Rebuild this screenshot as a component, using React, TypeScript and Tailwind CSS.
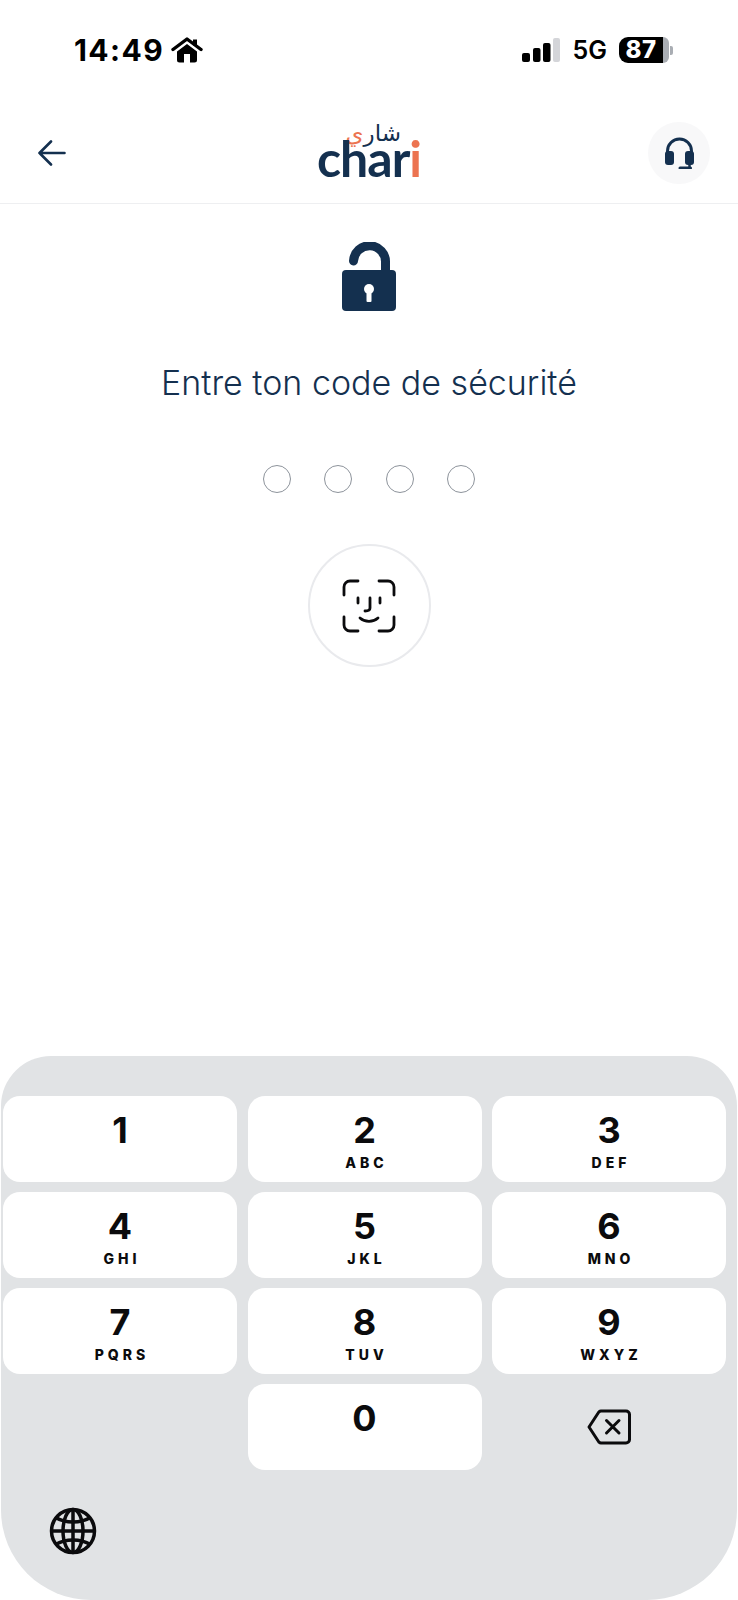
const KEYS = [
  { digit: "1", letters: "" },
  { digit: "2", letters: "ABC" },
  { digit: "3", letters: "DEF" },
  { digit: "4", letters: "GHI" },
  { digit: "5", letters: "JKL" },
  { digit: "6", letters: "MNO" },
  { digit: "7", letters: "PQRS" },
  { digit: "8", letters: "TUV" },
  { digit: "9", letters: "WXYZ" },
];

function Key({ digit, letters }: { digit: string; letters: string }) {
  return (
    <div className="h-[86px] rounded-[17px] bg-white flex flex-col items-center pt-[16px]">
      <span className="text-[36px] leading-[36px] font-bold text-[#0b0b0d]">{digit}</span>
      {letters && (
        <span className="mt-[8px] pl-[4px] text-[14px] leading-[14px] font-extrabold tracking-[4px] text-[#0b0b0d]">
          {letters}
        </span>
      )}
    </div>
  );
}

function HomeIcon() {
  return (
    <svg width="32" height="26" viewBox="0 0 32 26" className="shrink-0">
      <path d="M22 2.5h4v6h-4z" fill="#000" />
      <path d="M2 12.5 16 2l14 10.5" fill="none" stroke="#000" strokeWidth="3.4" strokeLinecap="round" strokeLinejoin="round" />
      <path
        fillRule="evenodd"
        d="M16 7 6 14.5V23a2.5 2.5 0 0 0 2.5 2.5h15A2.5 2.5 0 0 0 26 23v-8.5L16 7Zm-3 10h6v8.5h-6V17Z"
        fill="#000"
      />
    </svg>
  );
}

function SignalIcon() {
  return (
    <svg width="38" height="24" viewBox="0 0 38 24">
      <rect x="0" y="15" width="8" height="9" rx="2" fill="#000" />
      <rect x="11" y="10" width="7.5" height="14" rx="2" fill="#000" />
      <rect x="21" y="5" width="7.5" height="19" rx="2" fill="#000" />
      <rect x="31" y="0" width="7" height="24" rx="2" fill="#d4d5d9" />
    </svg>
  );
}

function StatusBar() {
  return (
    <div className="h-[100px] shrink-0 flex items-center justify-between pl-[74px] pr-[65px]">
      <div className="flex items-center gap-[7px]">
        <span className="text-[30px] leading-none font-bold tracking-[1.4px] text-black">14:49</span>
        <HomeIcon />
      </div>
      <div className="flex items-center">
        <SignalIcon />
        <span className="ml-[13px] text-[25px] leading-none font-semibold text-black">5G</span>
        <div className="ml-[12px] flex h-[26px] w-[50px]">
          <div className="flex w-[44px] items-center justify-center rounded-l-[9px] bg-black text-[24px] leading-none font-extrabold tracking-[0.5px] text-white">
            87
          </div>
          <div className="flex-1 rounded-r-[9px] bg-[#a9adb3]" />
        </div>
        <div className="ml-[1px] h-[9px] w-[3px] rounded-r-[2px] bg-[#a9adb3]" />
      </div>
    </div>
  );
}

function Logo() {
  return (
    <div className="flex flex-col items-center w-[104px]">
      <div
        dir="rtl"
        className="h-[20px] self-end mr-[20px] text-[23px] leading-[20px] text-[#14304f] font-['DejaVu_Sans',sans-serif]"
      >
        شار<span className="text-[#ec7350]">ي</span>
      </div>
      <div className="-mt-[10px] text-[50px] leading-[50px] font-bold tracking-[-1px] text-[#14304f] font-['Lato',sans-serif]">
        char
        <span className="text-[#ec7350]">i</span>
      </div>
    </div>
  );
}

function Header() {
  return (
    <div className="h-[104px] shrink-0 border-b border-[#eeeff1] flex items-center justify-between pl-[38px] pr-[28px] pt-[3px]">
      <div className="w-[52px]">
        <svg width="28" height="26" viewBox="0 0 28 26" fill="none" stroke="#14304f" strokeWidth="2.6" strokeLinecap="round" strokeLinejoin="round">
          <path d="M26.500 13H1.500M13 1.500 1.500 13 13 24.500" />
        </svg>
      </div>
      <Logo />
      <div className="flex h-[62px] w-[62px] items-center justify-center rounded-full bg-[#f8f8f9]">
        <svg width="29" height="32" viewBox="0 0 29 32" fill="none">
          <path d="M2.500 18v-4a12 12 0 0 1 24 0v4" stroke="#14304f" strokeWidth="3" />
          <rect x="0" y="14" width="9" height="14" rx="3" fill="#14304f" />
          <rect x="20" y="14" width="9" height="14" rx="3" fill="#14304f" />
          <path d="M15 31h10.500" stroke="#14304f" strokeWidth="3" strokeLinecap="round" />
          <path d="M24.500 27v4" stroke="#14304f" strokeWidth="2.500" />
        </svg>
      </div>
    </div>
  );
}

function LockIcon() {
  return (
    <svg width="54" height="69" viewBox="0 0 54 69">
      <path d="M11.500 19A16 16 0 0 1 43.500 20.500V32" fill="none" stroke="#14304f" strokeWidth="9" strokeLinecap="round" />
      <rect x="0" y="28" width="54" height="41" rx="4" fill="#14304f" />
      <circle cx="27" cy="47" r="5" fill="#fff" />
      <rect x="24.500" y="47" width="5" height="13" rx="1" fill="#fff" />
    </svg>
  );
}

function FaceIdIcon() {
  return (
    <svg width="54" height="54" viewBox="0 0 54 54" fill="none" stroke="#0b0b0d" strokeWidth="2.800" strokeLinecap="round" strokeLinejoin="round">
      <path d="M2 16V8a6 6 0 0 1 6-6h8" />
      <path d="M37 2h9a6 6 0 0 1 6 6v8" />
      <path d="M2 38v8a6 6 0 0 0 6 6h8" />
      <path d="M52 38v8a6 6 0 0 1-6 6h-9" />
      <path d="M16 19v5M38 19v5" />
      <path d="M28 19v10c0 2-1.500 3-5 3" />
      <path d="M18 39c5 4.500 13 4.500 18 0" />
    </svg>
  );
}

function BackspaceIcon() {
  return (
    <svg width="44" height="36" viewBox="0 0 44 36" fill="none" stroke="#0b0b0d" strokeWidth="3" strokeLinecap="round" strokeLinejoin="round">
      <path d="M14 2h25a3.500 3.500 0 0 1 3.500 3.500v25a3.500 3.500 0 0 1-3.500 3.500H14a3 3 0 0 1-2-.8L2 18 12 2.800A3 3 0 0 1 14 2Z" />
      <path d="M19.500 11.500 32 24M32 11.500 19.500 24" />
    </svg>
  );
}

function GlobeIcon() {
  return (
    <svg width="48" height="48" viewBox="0 0 48 48" fill="none" stroke="#0b0b0d" strokeWidth="3.500">
      <circle cx="24" cy="24" r="21.500" />
      <ellipse cx="24" cy="24" rx="10" ry="21.500" />
      <path d="M24 2v44M2 24h44" />
      <path d="M6.500 10.500c10 6 25 6 35 0M6.500 37.500c10-6 25-6 35 0" />
    </svg>
  );
}

function Keyboard() {
  return (
    <div className="mt-auto ml-[1px] h-[544px] w-[736px] shrink-0 rounded-t-[50px] rounded-b-[90px] bg-[#e1e3e5] pl-[2px] pt-[40px]">
      <div className="grid w-[723px] grid-cols-3 gap-x-[10.500px] gap-y-[10px]">
        {KEYS.map((k) => (
          <Key key={k.digit} digit={k.digit} letters={k.letters} />
        ))}
        <div />
        <Key digit="0" letters="" />
        <div className="flex items-center justify-center">
          <BackspaceIcon />
        </div>
      </div>
      <div className="ml-[46px] mt-[37px]">
        <GlobeIcon />
      </div>
    </div>
  );
}

export default function App() {
  return (
    <div className="flex h-[1600px] w-[738px] flex-col overflow-hidden bg-white font-['Inter',sans-serif]">
      <StatusBar />
      <Header />
      <div className="flex flex-col items-center">
        <div className="mt-[38px]">
          <LockIcon />
        </div>
        <h1 className="mt-[52px] text-[34px] leading-[40px] font-light text-[#14304f]">
          Entre ton code de sécurité
        </h1>
        <div className="mt-[62px] flex gap-[33.500px]">
          {[0, 1, 2, 3].map((i) => (
            <div key={i} className="h-[28px] w-[28px] rounded-full border border-[#8d939b]" />
          ))}
        </div>
        <div className="mt-[51px] flex h-[123px] w-[123px] items-center justify-center rounded-full border-2 border-[#e9eaed]">
          <FaceIdIcon />
        </div>
      </div>
      <Keyboard />
    </div>
  );
}
